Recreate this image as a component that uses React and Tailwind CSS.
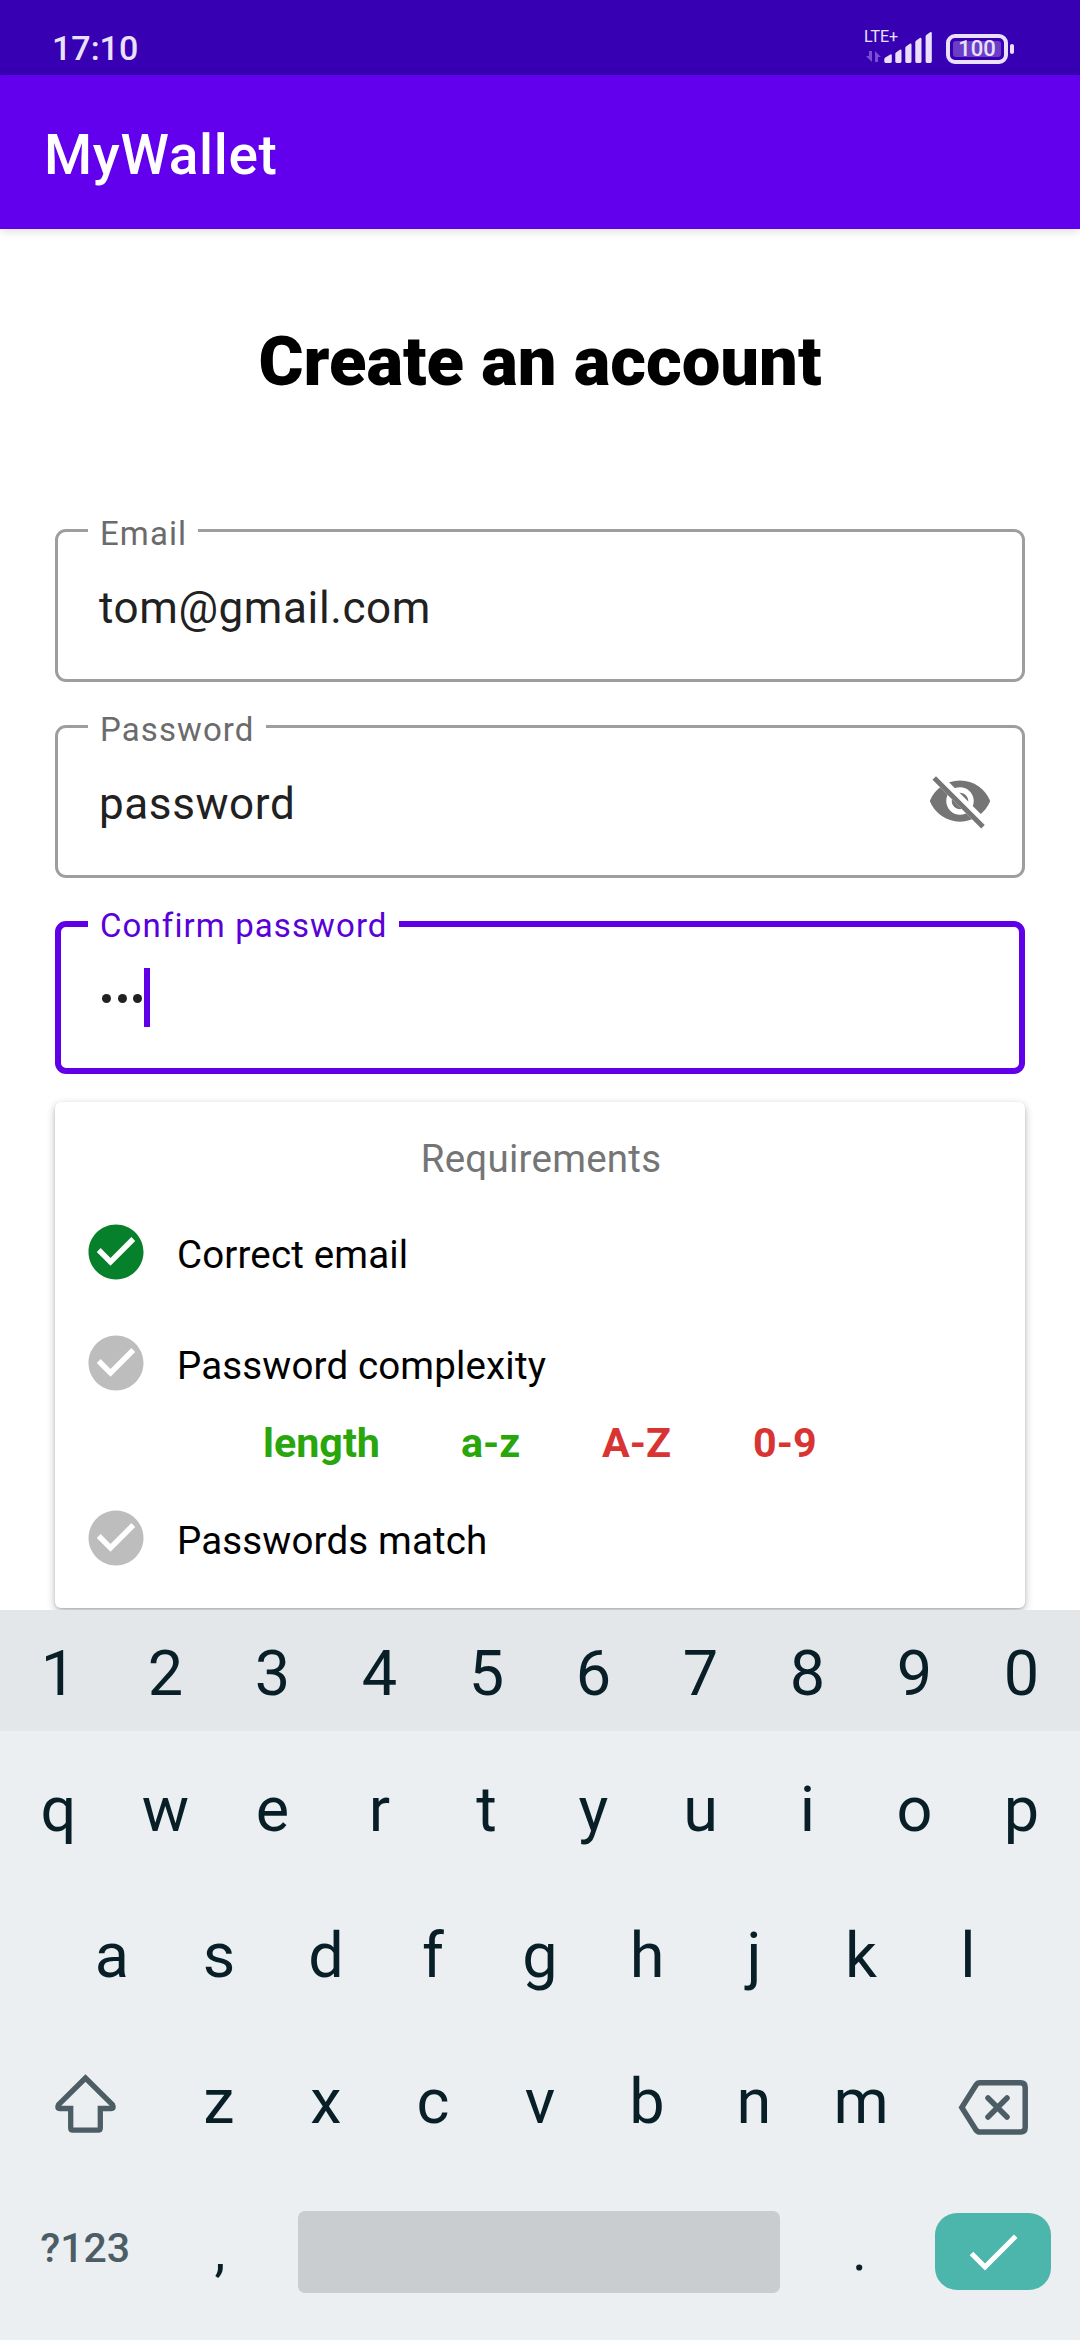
const CHECK_CIRCLE =
  'M12 2C6.48 2 2 6.48 2 12s4.48 10 10 10 10-4.48 10-10S17.52 2 12 2zm-2 15l-5-5 1.41-1.41L10 14.17l7.59-7.59L19 8l-9 9z';

function StatusBar() {
  return (
    <div className="flex h-[75px] items-start justify-between bg-[#3700b3] pl-[52px] pr-[66px] text-[#ebe0fb]">
      <span className="mt-[28px] text-[34px] font-medium leading-[40px]">17:10</span>
      <div className="mt-[29px] flex">
        <div className="relative h-[36px] w-[82px]">
          <span className="absolute left-0 top-0 text-[16px] leading-[16px]">LTE+</span>
          <svg className="absolute left-0 top-0" width="82" height="36" viewBox="864 29 82 36">
            <path d="M869 51h3v11l-6-6h3zM875 62V51l6 6h-3v5z" fill="#7a4fd0" />
            <g fill="#ebe0fb">
              <path d="M884.3 59q0-1 1-1.600l5-3q1.500-.6 1.500 1v6.200q0 1.400-1.400 1.400h-4.700q-1.400 0-1.400-1.400z" />
              <path d="M895.300 54q0-1 1-1.800l3.500-2.400q1.700-.8 1.700 1v10.800q0 1.400-1.400 1.400h-3.400q-1.400 0-1.400-1.400z" />
              <path d="M905.300 48q0-1 1-1.800l3.500-2.400q1.700-.8 1.700 1v16.800q0 1.400-1.400 1.400h-3.400q-1.400 0-1.400-1.400z" />
              <path d="M915.300 42.300q0-1 1-1.800l3.500-2.400q1.700-.8 1.700 1v22.500q0 1.400-1.400 1.400h-3.400q-1.400 0-1.400-1.400z" />
              <path d="M925.600 36.500q0-1 1-1.800l3.500-2.400q1.700-.8 1.700 1v28.300q0 1.400-1.400 1.400h-3.400q-1.400 0-1.400-1.400z" />
            </g>
          </svg>
        </div>
        <div className="mt-[3px] flex items-center gap-[2px]">
          <div className="flex h-[30px] w-[62px] items-center justify-center rounded-[9px] border-4 border-[#ebe0fb]">
            <div className="flex h-[16px] w-[48px] items-center justify-center rounded-[3px] bg-[#6a3fc6] text-[22px] font-medium leading-[16px]">
              100
            </div>
          </div>
          <div className="h-[10px] w-[4px] rounded-[2px] bg-[#ebe0fb]" />
        </div>
      </div>
    </div>
  );
}

function Field({ label, focused, className, children }) {
  return (
    <div
      className={`relative flex h-[153px] items-center rounded-[11px] border-solid ${
        focused ? 'border-[6px] border-[#5f00e8] pl-[38px]' : 'border-[3px] border-[#9e9e9e] pl-[41px]'
      } ${className}`}
    >
      <span
        className={`absolute bg-white pl-[12px] pr-[11px] text-[33px] leading-[40px] tracking-[1.1px] ${
          focused ? '-top-[21px] left-[27px] text-[#5a00d8]' : '-top-[18px] left-[30px] text-[#6b6b6b]'
        }`}
      >
        {label}
      </span>
      {children}
    </div>
  );
}

function EyeOff() {
  return (
    <svg className="mb-[2px]" width="66" height="66" viewBox="0 0 24 24" fill="#757575">
      <clipPath id="eye-clip">
        <path d="M2 4.27L19.73 22 22.27 19.46 4.54 1.73V1H23v22H1V4.270z" />
      </clipPath>
      <path d="M2 4.27L19.73 22 21 20.730 3.270 3z" />
      <path
        clipPath="url(#eye-clip)"
        d="M12 4.500C7 4.500 2.730 7.610 1 12c1.730 4.390 6 7.500 11 7.500s9.270-3.110 11-7.500c-1.730-4.390-6-7.500-11-7.500zM12 17c-2.760 0-5-2.240-5-5s2.240-5 5-5 5 2.240 5 5-2.240 5-5 5zM12 9c-1.660 0-3 1.340-3 3s1.340 3 3 3 3-1.340 3-3-1.340-3-3-3z"
      />
    </svg>
  );
}

function Requirement({ done, children, className }) {
  return (
    <div className={`flex h-[66px] items-center pl-[28px] ${className}`}>
      <svg width="66" height="66" viewBox="0 0 24 24" fill={done ? '#06802a' : '#bdbdbd'}>
        <path d={CHECK_CIRCLE} />
      </svg>
      <span className="ml-[28px] mt-[5px] text-[38.5px] leading-[46px] tracking-[0.150px] text-black">{children}</span>
    </div>
  );
}

function Key({ children }) {
  return <div className="w-[107px] text-center">{children}</div>;
}

function KeyRow({ keys, className }) {
  return (
    <div className={`flex items-center justify-center ${className}`}>
      {keys.split('').map((k) => (
        <Key key={k}>{k}</Key>
      ))}
    </div>
  );
}

function Keyboard() {
  return (
    <div className="relative flex h-[730px] flex-col bg-[#ebeff1] text-[63px] leading-[74px] text-[#081f28]">
      <KeyRow keys="1234567890" className="h-[121px] bg-[#e3e7e9] pt-[7px]" />
      <KeyRow keys="qwertyuiop" className="h-[146px] pt-[12px]" />
      <KeyRow keys="asdfghjkl" className="h-[146px] pt-[12px]" />
      <div className="flex h-[146px] px-[5px]">
        <svg className="w-[160.5px]" height="146" viewBox="5 2023 160.5 146" fill="none" stroke="#4c5d65">
          <path
            d="M85.500 2078L58.600 2104.500Q56.500 2108.500 60 2108.500H70.700V2128Q70.700 2130.200 73 2130.200H98Q100.300 2130.200 100.300 2128V2108.500H111Q114.500 2108.500 112.400 2104.500Z"
            strokeWidth="5.300"
          />
        </svg>
        <KeyRow keys="zxcvbnm" className="h-[146px] pt-[12px]" />
        <svg className="w-[160.500px]" height="146" viewBox="914.500 2023 160.500 146" fill="none" stroke="#4c5d65">
          <path
            d="M961.300 2107.500L975.500 2085Q977 2082.800 979.500 2082.800H1020Q1024.700 2082.800 1024.700 2087.500V2127.500Q1024.700 2132 1020 2132H979.500Q977 2132 975.500 2130Z"
            strokeWidth="5.500"
          />
          <path d="M987.500 2098L1006.500 2117M1006.500 2098L987.500 2117" strokeWidth="5.500" strokeLinecap="round" />
        </svg>
      </div>
      <div className="flex h-[146px] items-start px-[5px]">
        <div className="mt-[55px] w-[160.500px] text-center text-[41px] font-medium leading-[48px] text-[#4c5d65]">
          ?123
        </div>
        <div className="ml-[1px] mt-[50px] w-[107px] text-center text-[55px] leading-[64px]">,</div>
        <div className="ml-[24.500px] mt-[42px] h-[82px] w-[482px] rounded-[7px] bg-[#c9cdd0]" />
        <div className="ml-[26px] mt-[50px] w-[107px] text-center text-[55px] leading-[64px]">.</div>
        <div className="ml-[22px] mt-[44px] h-[77px] w-[116px] rounded-[22px] bg-[#4db6ac]">
          <svg width="116" height="77" viewBox="935 2213 116 77" fill="none" stroke="#ffffff" strokeWidth="5">
            <path d="M971.500 2253.500L985 2267L1015.700 2236.300" />
          </svg>
        </div>
      </div>
    </div>
  );
}

export default function App() {
  return (
    <div className="flex h-[2340px] w-[1080px] flex-col overflow-hidden bg-white font-[Roboto,sans-serif]">
      <StatusBar />
      <header className="relative flex h-[154px] items-center bg-[#6200ee] pl-[44px] pt-[6px] text-[55px] font-medium leading-[64px] tracking-[0.700px] text-white shadow-[0_2px_9px_rgba(0,0,0,0.14)]">
        MyWallet
      </header>
      <main className="flex h-[1381px] flex-col px-[55px]">
        <h1 className="mt-[93px] h-[80px] text-center text-[68.750px] font-black leading-[80px] text-black">
          Create an account
        </h1>
        <Field label="Email" className="mt-[127px] pt-[5px] text-[44px] tracking-[0.600px] text-[#212121]">
          tom@gmail.com
        </Field>
        <Field
          label="Password"
          className="mt-[43px] justify-between pr-[29px] text-[44px] tracking-[0.600px] text-[#212121]"
        >
          <span className="pt-[5px]">password</span>
          <EyeOff />
        </Field>
        <Field label="Confirm password" focused className="mt-[43px]">
          <div className="flex items-center gap-[6.500px] pl-[3px] pt-[2px]">
            <div className="size-[9px] rounded-full bg-[#212121]" />
            <div className="size-[9px] rounded-full bg-[#212121]" />
            <div className="size-[9px] rounded-full bg-[#212121]" />
          </div>
          <div className="ml-[2px] h-[59px] w-[6px] bg-[#5f00e8]" />
        </Field>
        <section className="mt-[28px] h-[506px] rounded-[6px] bg-white shadow-[0_3px_8px_rgba(0,0,0,0.28),0_1px_2px_rgba(0,0,0,0.12)]">
          <h2 className="pl-[2px] pt-[34px] text-center text-[38.500px] leading-[46px] tracking-[0.250px] text-[#757575]">
            Requirements
          </h2>
          <Requirement done className="mt-[37px]">
            Correct email
          </Requirement>
          <Requirement className="mt-[45px]">Password complexity</Requirement>
          <div className="flex h-[50px] pl-[208px] pt-[23px] text-[41.250px] font-bold leading-[48px] text-[#28a60c]">
            <span className="w-[198px]">length</span>
            <span className="w-[141px]">a-z</span>
            <span className="w-[151px] text-[#d93434]">A-Z</span>
            <span className="text-[#d93434]">0-9</span>
          </div>
          <Requirement className="mt-[59px]">Passwords match</Requirement>
        </section>
      </main>
      <Keyboard />
    </div>
  );
}
